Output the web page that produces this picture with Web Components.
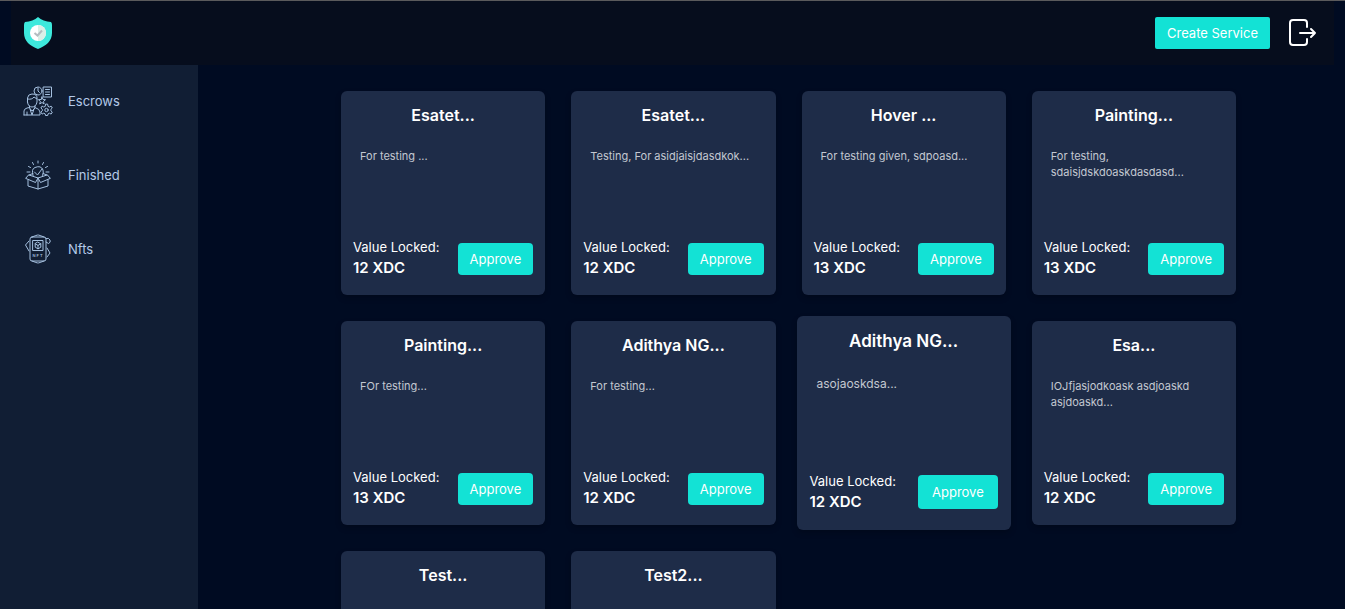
<!DOCTYPE html>
<html lang="en">
<head>
<meta charset="utf-8">
<meta name="viewport" content="width=device-width, initial-scale=1">
<title>Escrow services</title>
<style>
html { scrollbar-width: none; }
html, body { margin: 0; background: #000b22; }
body { font-family: Inter, "Liberation Sans", sans-serif; color: #fff; }
</style>
</head>
<body>
<escrow-app></escrow-app>

<template id="t-app">
<style>
:host { display: flex; flex-direction: column; min-height: 100vh; box-sizing: border-box; border-top: 1px solid #5a5a5c; }
.body { display: flex; flex: 1; }
main { flex: 1; min-width: 0; padding: 26px 0 26px 34px; }
.grid { display: grid; grid-template-columns: repeat(4, 1fr); grid-auto-rows: 204px; gap: 26px; max-width: 895px; margin: 0 auto; }
</style>
<app-header></app-header>
<div class="body">
<side-nav>
<nav-item icon="escrow">Escrows</nav-item>
<nav-item icon="finished">Finished</nav-item>
<nav-item icon="nft">Nfts</nav-item>
</side-nav>
<main><div class="grid">
<service-card value="12 XDC"><span slot="title">Esatet...</span>For testing ...</service-card>
<service-card value="12 XDC"><span slot="title">Esatet...</span>Testing, For asidjaisjdasdkok...</service-card>
<service-card value="13 XDC"><span slot="title">Hover ...</span>For testing given, sdpoasd...</service-card>
<service-card value="13 XDC"><span slot="title">Painting...</span>For testing, sdaisjdskdoaskdasdasd...</service-card>
<service-card value="13 XDC"><span slot="title">Painting...</span>FOr testing...</service-card>
<service-card value="12 XDC"><span slot="title">Adithya NG...</span>For testing...</service-card>
<service-card value="12 XDC" raised><span slot="title">Adithya NG...</span>asojaoskdsa...</service-card>
<service-card value="12 XDC"><span slot="title">Esa...</span>IOJfjasjodkoask asdjoaskd asjdoaskd...</service-card>
<service-card><span slot="title">Test...</span></service-card>
<service-card><span slot="title">Test2...</span></service-card>
</div></main>
</div>
</template>

<template id="t-header">
<style>
:host { display: block; padding: 0 11px; }
header { display: flex; align-items: center; justify-content: space-between; height: 64px; padding: 0 17px 0 12px; background: #060d1d; }
a, .actions { display: flex; align-items: center; }
.actions { gap: 19px; }
.exit { display: block; padding: 0; border: 0; background: none; color: #fff; cursor: pointer; }
svg { display: block; }
</style>
<header>
<a href="#" aria-label="Home">
<svg width="30" height="34" viewBox="0 0 30 34"><path d="M15 1C12 4 7 5.500 2 6Q1 7 1 9V17C1 25 7 30 15 33C23 30 29 25 29 17V9Q29 7 28 6C23 5.500 18 4 15 1Z" fill="#3de9dc"/><circle cx="15" cy="17" r="8" fill="#fff"/><path d="M15 9a8 8 0 0 1 0 16Z" fill="#dcefe7"/><path d="m11.500 17 3 2.500 4.500-5" fill="none" stroke="#b4bdc1" stroke-width="2"/></svg>
</a>
<div class="actions">
<action-button size="wide">Create Service</action-button>
<button class="exit" aria-label="Log out"><svg width="28" height="28" viewBox="0 0 28 28" fill="none" stroke="currentColor" stroke-width="2" stroke-linecap="round" stroke-linejoin="round"><path d="M18 8V4Q18 1 15 1H4Q1 1 1 4V23Q1 26 4 26H15Q18 26 18 23V20M11 14H26M22 10l4 4-4 4"/></svg></button>
</div>
</header>
</template>

<template id="t-nav">
<style>
:host { display: block; flex: 0 0 198px; background: #111e34; }
nav { display: flex; flex-direction: column; gap: 42px; padding: 20px 0 0 22px; }
</style>
<nav aria-label="Main"><slot></slot></nav>
</template>

<template id="t-item">
<style>
:host { display: block; }
a { display: flex; align-items: center; gap: 14px; height: 32px; color: #b4cae8; font-size: 13px; line-height: 16px; text-decoration: none; }
.icon { width: 32px; height: 32px; }
svg { display: block; fill: none; stroke: #a5c0df; stroke-width: 1; stroke-linejoin: round; stroke-linecap: round; }
</style>
<a href="#"><span class="icon"></span><span><slot></slot></span></a>
</template>

<template id="t-button">
<style>
:host { display: block; flex: none; }
button { display: block; box-sizing: border-box; height: 32px; padding: 0 12px; border: 0; border-radius: 4px; background: #13e2d5; color: #fff; font-family: inherit; font-size: 13px; line-height: 30px; white-space: nowrap; cursor: pointer; }
:host([size="wide"]) button { border-radius: 2px; }
:host([size="large"]) button { height: 34px; padding: 0 14px; line-height: 32px; }
</style>
<button type="button"><slot></slot></button>
</template>

<template id="t-card">
<style>
:host { display: block; }
article { display: flex; flex-direction: column; box-sizing: border-box; height: 100%; padding: 13px 12px 17px; border-radius: 6px; background: #1e2c48; box-shadow: 0 3px 6px rgba(0, 0, 0, .2); }
h2 { margin: 0; font-size: 16px; line-height: 22px; font-weight: 600; text-align: center; }
p { margin: 22px 7px 0; font-size: 11px; line-height: 16px; color: #c3c8d1; }
footer { display: flex; align-items: flex-end; justify-content: space-between; margin-top: auto; }
.value { font-size: 13px; line-height: 21px; white-space: nowrap; }
strong { display: block; font-size: 15px; line-height: 20px; font-weight: 600; }
.button { padding-bottom: 3px; }
:host([raised]) { margin: -5px; }
:host([raised]) article { padding: 14px 13px 18px; }
:host([raised]) h2 { font-size: 17px; }
:host([raised]) p { margin-top: 24px; font-size: 12px; }
</style>
<article>
<h2><slot name="title"></slot></h2>
<p><slot></slot></p>
<footer><div class="value">Value Locked:<strong></strong></div><action-button class="button">Approve</action-button></footer>
</article>
</template>

<script>
const icons = {
  escrow: `<svg width="32" height="32" viewBox="0 0 32 32"><circle cx="16" cy="6" r="4"/><path d="M16 3v3l1.500 1.500M21.500 2h8v10h-8zM23.500 4.500h4M23.500 7h4M23.500 9.500h4"/><path d="M5.500 17V13Q6 9 10 9Q15 9 15 13V17Q14 22 10 22Q6 22 5.500 17ZM5.500 14Q10 15 12 12L15 14M7.500 21v2L10 26l3-3v-2M2 30V26Q2 24 5 23L7.500 22.500M13 22.500Q18 24 18 27V30H2M8 24l2 6 2-6M5 27v3"/><path d="m20 12 1 2.500 2.500.2-2 1.700.6 2.600-2.100-1.500-2.300 1.500.7-2.600-2-1.700 2.600-.2Z"/><circle cx="24.500" cy="25" r="1.700"/><path d="m23.500 19.500-.3 1.900-1.500.6-1.600-.9-1.200 1.900 1.400 1.300v1.500l-1.400 1.300 1.200 2 1.600-.9 1.500.7.3 1.600h2.200l.3-1.600 1.500-.7 1.600.9 1.200-2-1.400-1.300v-1.500l1.400-1.300-1.200-1.900-1.600.9-1.500-.6-.3-1.900Z"/></svg>`,
  finished: `<svg width="32" height="32" viewBox="0 0 32 32"><path d="M11 16.500Q9 10 13 8.500Q19 6 21 11Q22 14 20.500 16.500M12.500 13l3 3 4.500-6M16 2V4M10.500 3.500l1 2M21.500 3.500l-1 2M6.500 7.500l2 1M25.500 7.500l-2 1M5 13h3M24 13h3"/><path d="m7 16 9 3-2.500 4.500L4 19.500ZM25 16l-9 3 2.500 4.500L28 19.500ZM7 16l4-1.500M25 16l-4-1.500M6 21v6l10 3 10-3v-6M16 19v11"/></svg>`,
  nft: `<svg width="32" height="32" viewBox="0 0 32 32"><rect x="8" y="4" width="16" height="24" rx="2"/><path d="M11 7.500h10v10H11zM16 9.200l2.800 1.600v3.400L16 15.800l-2.800-1.600v-3.400ZM13.200 10.800 16 12.400l2.800-1.600M16 12.400v3.400M10 4q5-2 6-2t6 2M10 28q5 2 6 2t6-2M7 8l-3.500 4 3.500 6M25 15l3 5-3 4M24 5.500q3-1 4 1.500t-1.500 3.500L24 9"/><text x="10.500" y="24" font-family="Inter, sans-serif" font-size="4" font-weight="600" letter-spacing="1" fill="#a5c0df" stroke="none">NFT</text></svg>`
};

function define(name, templateId, setup) {
  customElements.define(name, class extends HTMLElement {
    constructor() {
      super();
      this.attachShadow({ mode: 'open' }).append(document.getElementById(templateId).content.cloneNode(true));
    }
    connectedCallback() { if (setup) setup(this, this.shadowRoot); }
  });
}

define('action-button', 't-button');
define('nav-item', 't-item', (el, root) => {
  root.querySelector('.icon').innerHTML = icons[el.getAttribute('icon')];
});
define('service-card', 't-card', (el, root) => {
  if (el.hasAttribute('value')) root.querySelector('strong').textContent = el.getAttribute('value');
  else root.querySelector('footer').remove();
  if (el.hasAttribute('raised')) root.querySelector('action-button').setAttribute('size', 'large');
});
define('side-nav', 't-nav');
define('app-header', 't-header');
define('escrow-app', 't-app');
</script>
</body>
</html>
